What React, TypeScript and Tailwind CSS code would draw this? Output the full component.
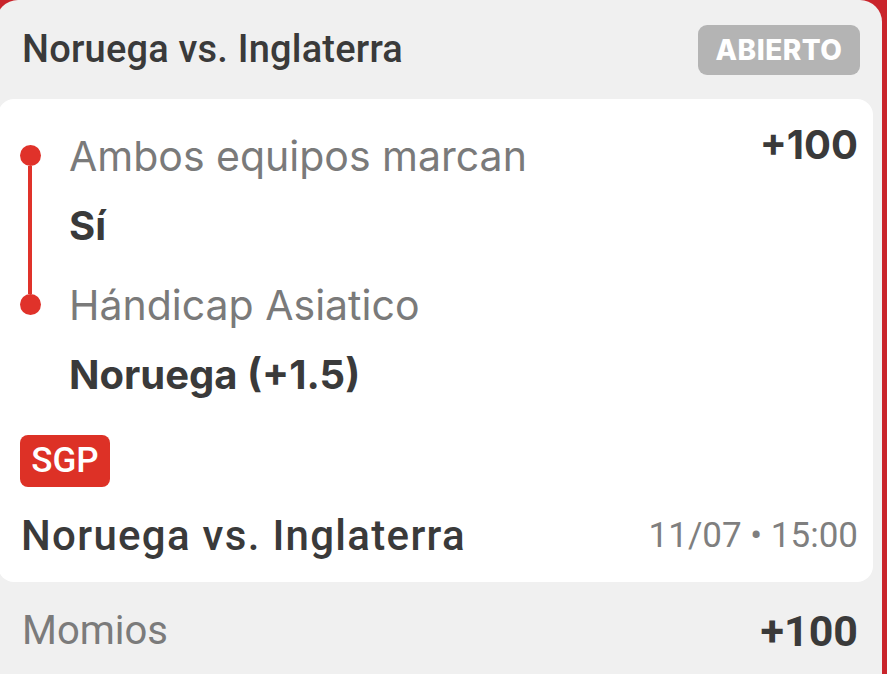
const inter = "font-['Inter','Noto_Sans',sans-serif]";
const roboto = "font-['Roboto','Liberation_Sans',sans-serif]";

const Leg = ({ label, pick, first, last }: { label: string; pick: string; first?: boolean; last?: boolean }) => (
  <div className="flex">
    <div className="flex w-[22px] flex-col items-center">
      <div className={`h-[24px] w-[4px] ${first ? "bg-transparent" : "bg-[#e0322a]"}`} />
      <div className="h-[21px] w-[21px] shrink-0 rounded-full bg-[#e0322a]" />
      <div className={`w-[4px] flex-1 ${last ? "bg-transparent" : "bg-[#e0322a]"}`} />
    </div>
    <div className={`ml-[28px] ${last ? "" : "pb-[9px]"}`}>
      <div className={`${inter} text-[41px] leading-[70px] text-[#7a7a7a]`}>{label}</div>
      <div className={`${inter} text-[40px] leading-[70px] font-bold text-[#3a3a3a]`}>{pick}</div>
    </div>
  </div>
);

export default function App() {
  return (
    <div className="h-[674px] w-full overflow-hidden bg-[#c9242b]">
      <div className="ml-[-4px] h-full w-[886px] rounded-t-[22px] bg-[#f0f0f0]">
        <div className="flex h-[99px] items-center justify-between pl-[26px] pr-[22px]">
          <h1 className={`${roboto} text-[38px] tracking-[0.2px] font-medium text-[#3a3a3a]`}>Noruega vs. Inglaterra</h1>
          <span className={`${inter} flex h-[50px] w-[162px] items-center justify-center rounded-[9px] bg-[#b4b4b4] text-[28px] tracking-[0.5px] font-extrabold text-white`}>
            ABIERTO
          </span>
        </div>

        <div className="ml-[2px] mr-[9px] rounded-[16px] bg-white pb-[21px] pl-[21px] pr-[15px] pt-[22px]">
          <div className="flex justify-between">
            <div className="flex flex-col">
              <Leg first label="Ambos equipos marcan" pick="Sí" />
              <Leg last label="Hándicap Asiatico" pick="Noruega (+1.5)" />
            </div>
            <span className={`${inter} text-[40px] leading-[48px] font-bold text-[#3a3a3a]`}>+100</span>
          </div>

          <div className="mt-[25px]">
            <span className={`${roboto} ml-[1px] inline-flex h-[52px] w-[90px] items-center justify-center rounded-[8px] bg-[#dd3126] text-[35px] font-medium text-white`}>
              SGP
            </span>
          </div>

          <div className="mt-[24px] flex items-center justify-between">
            <span className={`${roboto} ml-[2px] text-[42px] leading-[50px] tracking-[1.3px] font-medium text-[#3a3a3a]`}>Noruega vs. Inglaterra</span>
            <span className={`${roboto} text-[35px] leading-[50px] text-[#7f7f7f]`}>11/07 • 15:00</span>
          </div>
        </div>

        <div className="flex h-[92px] items-center justify-between pl-[26px] pr-[24px] pt-[6px]">
          <span className={`${roboto} text-[40px] text-[#7b7b7b]`}>Momios</span>
          <span className={`${roboto} text-[43px] font-bold text-[#3a3a3a]`}>+100</span>
        </div>
      </div>
    </div>
  );
}
